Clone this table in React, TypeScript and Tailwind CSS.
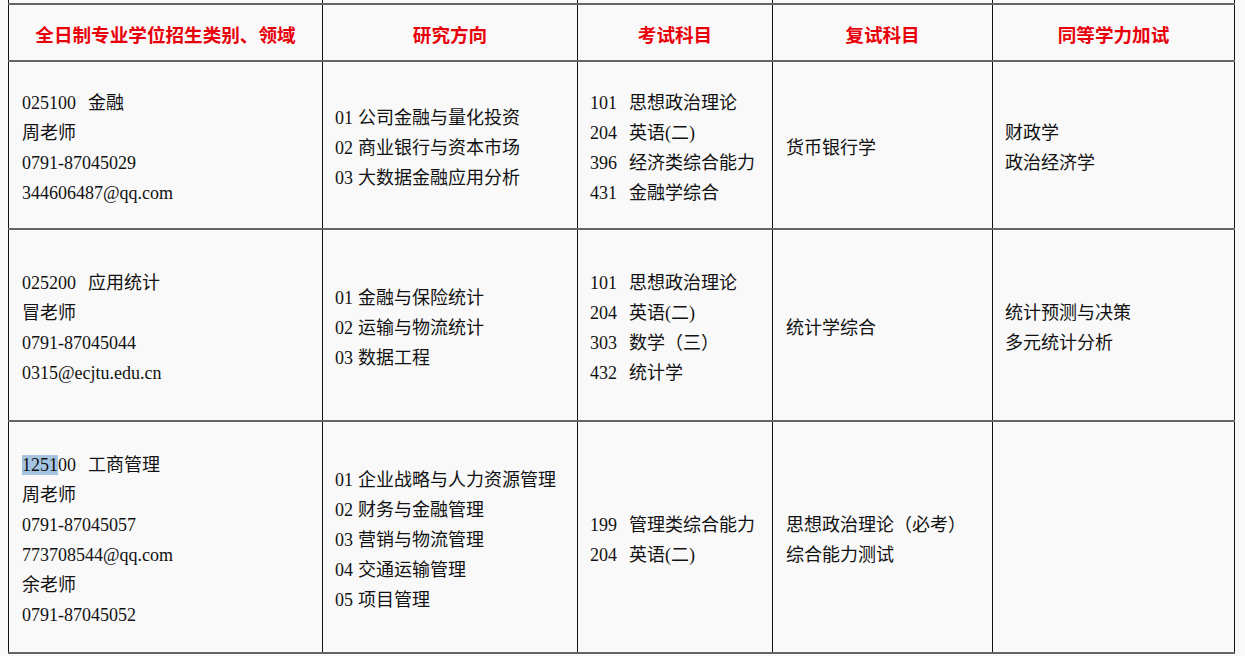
import React from 'react'

const cols = 'grid grid-cols-[314px_255px_195px_220px_243px]'
const cell = 'border-l border-[#111] flex flex-col justify-center pt-[5px]'
const lastCell = 'border-l border-r border-[#111] flex flex-col justify-center pt-[5px] pl-[12px]'

const headers = ['全日制专业学位招生类别、领域', '研究方向', '考试科目', '复试科目', '同等学力加试']

const Code = ({ n, w = 'w-[39px]' }: { n: string; w?: string }) => (
  <span className={`inline-block ${w}`}>{n}</span>
)

interface Row {
  height: string
  major: React.ReactNode[]
  directions: [string, string][]
  exams: [string, string][]
  retest: string[]
  extra: string[]
}

const rows: Row[] = [
  {
    height: 'h-[168px]',
    major: [
      <><Code n="025100" w="w-[66px]" />金融</>,
      '周老师',
      '0791-87045029',
      '344606487@qq.com'
    ],
    directions: [
      ['01', '公司金融与量化投资'],
      ['02', '商业银行与资本市场'],
      ['03', '大数据金融应用分析']
    ],
    exams: [
      ['101', '思想政治理论'],
      ['204', '英语(二)'],
      ['396', '经济类综合能力'],
      ['431', '金融学综合']
    ],
    retest: ['货币银行学'],
    extra: ['财政学', '政治经济学']
  },
  {
    height: 'h-[192px]',
    major: [
      <><Code n="025200" w="w-[66px]" />应用统计</>,
      '冒老师',
      '0791-87045044',
      '0315@ecjtu.edu.cn'
    ],
    directions: [
      ['01', '金融与保险统计'],
      ['02', '运输与物流统计'],
      ['03', '数据工程']
    ],
    exams: [
      ['101', '思想政治理论'],
      ['204', '英语(二)'],
      ['303', '数学（三）'],
      ['432', '统计学']
    ],
    retest: ['统计学综合'],
    extra: ['统计预测与决策', '多元统计分析']
  },
  {
    height: 'h-[232px]',
    major: [
      <>
        <span className="inline-block w-[66px]">
          <span className="bg-[#a4c4e2]">1251</span>00
        </span>
        工商管理
      </>,
      '周老师',
      '0791-87045057',
      '773708544@qq.com',
      '余老师',
      '0791-87045052'
    ],
    directions: [
      ['01', '企业战略与人力资源管理'],
      ['02', '财务与金融管理'],
      ['03', '营销与物流管理'],
      ['04', '交通运输管理'],
      ['05', '项目管理']
    ],
    exams: [
      ['199', '管理类综合能力'],
      ['204', '英语(二)']
    ],
    retest: ['思想政治理论（必考）', '综合能力测试'],
    extra: []
  }
]

export default function App() {
  return (
    <div
      className="min-h-screen bg-[#f9f9f9] pl-[8px] text-[#111] text-[18px] leading-[30px]"
      style={{ fontFamily: '"Liberation Serif", "Noto Sans CJK SC", serif' }}
    >
      <div className="w-[1227px]">
        {/* stub of previous row */}
        <div className={`${cols} h-[5px] border-b-2 border-b-[#666]`}>
          <div className="border-l border-[#111]" />
          <div className="border-l border-[#111]" />
          <div className="border-l border-[#111]" />
          <div className="border-l border-[#111]" />
          <div className="border-l border-r border-[#111]" />
        </div>

        {/* header */}
        <div className={`${cols} h-[57px] border-b-2 border-b-[#666]`}>
          {headers.map((h, i) => (
            <div
              key={h}
              className={`${i === 4 ? 'border-r' : ''} border-l border-[#111] flex items-center justify-center pt-[3px] font-bold text-[18.6px] text-[#e8000b]`}
              style={{ fontFamily: '"Noto Sans CJK SC", "Liberation Sans", sans-serif' }}
            >
              {h}
            </div>
          ))}
        </div>

        {rows.map((r, idx) => (
          <div key={idx} className={`${cols} ${r.height} border-b-2 border-b-[#666]`}>
            <div className={`${cell} pl-[13px]`}>
              {r.major.map((m, i) => (
                <div key={i}>{m}</div>
              ))}
            </div>
            <div className={`${cell} pl-[12px]`}>
              {r.directions.map(([n, t]) => (
                <div key={n}>
                  <Code n={n} w="w-[23px]" />
                  {t}
                </div>
              ))}
            </div>
            <div className={`${cell} pl-[12px]`}>
              {r.exams.map(([n, t]) => (
                <div key={n}>
                  <Code n={n} />
                  {t}
                </div>
              ))}
            </div>
            <div className={`${cell} pl-[13px]`}>
              {r.retest.map(t => (
                <div key={t}>{t}</div>
              ))}
            </div>
            <div className={lastCell}>
              {r.extra.map(t => (
                <div key={t}>{t}</div>
              ))}
            </div>
          </div>
        ))}
      </div>
    </div>
  )
}
